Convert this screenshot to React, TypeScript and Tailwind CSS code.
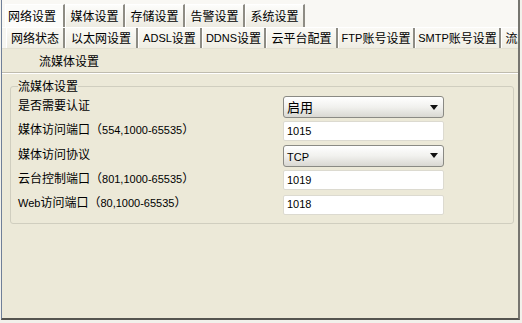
import React from 'react'

const FONT = { fontFamily: "'Noto Sans CJK SC', 'Liberation Sans', sans-serif" }

const TOP_TABS = ['网络设置', '媒体设置', '存储设置', '告警设置', '系统设置']

const SUB_TABS: { label: React.ReactNode; w: number }[] = [
  { label: '网络状态', w: 59 },
  { label: '以太网设置', w: 73 },
  { label: <><Lat>ADSL</Lat>设置</>, w: 64 },
  { label: <><Lat>DDNS</Lat>设置</>, w: 64 },
  { label: '云平台配置', w: 72 },
  { label: <><Lat>FTP</Lat>账号设置</>, w: 77 },
  { label: <><Lat>SMTP</Lat>账号设置</>, w: 86 },
  { label: '流媒体设置', w: 70 },
]

function Lat({ children }: { children: React.ReactNode }) {
  return (
    <span className="text-[11px]" style={{ fontFamily: "'Liberation Sans', sans-serif" }}>
      {children}
    </span>
  )
}

function Select({ value }: { value: React.ReactNode }) {
  return (
    <div className="w-[161px] h-[22px] rounded-[3px] border border-[#8A8A84] bg-gradient-to-b from-white via-[#F1F1EE] to-[#D9D8D2] flex items-center pl-[3px] pr-[5px] text-[13px] text-black">
      <span className="flex-1">{value}</span>
      <svg width="8" height="5" viewBox="0 0 8 5">
        <path d="M0 0 H8 L4 5 Z" fill="#111" />
      </svg>
    </div>
  )
}

function Input({ value }: { value: string }) {
  return (
    <div className="w-[161px] h-[20px] rounded-[2px] border border-[#DCDAD0] bg-white flex items-center pl-[3px]">
      <Lat>{value}</Lat>
    </div>
  )
}

function Row({ label, h, children }: { label: React.ReactNode; h: number; children: React.ReactNode }) {
  return (
    <div className="flex items-center" style={{ height: h }}>
      <div className="w-[265px] pb-[4px] text-[12px] text-black whitespace-nowrap">{label}</div>
      {children}
    </div>
  )
}

export default function App() {
  return (
    <div className="w-[522px] h-[323px] bg-[#F2F1EB]" style={FONT}>
      <div className="ml-[1px] w-[519px] h-[320px] border-l border-l-[#6F7F98] border-r-2 border-r-[#76756F] border-b-2 border-b-[#55544F] bg-[#ECE9D8] flex flex-col">
        {/* Top tab row */}
        <div className="h-[28px] bg-[#F9F8F4] flex items-end pl-[3px] border-b border-b-white">
          {TOP_TABS.map((t, i) => (
            <div
              key={t}
              className={`w-[60px] h-[23px] flex items-center text-[12px] text-black border-t border-l border-t-white border-l-white border-r-2 border-r-[#8E8C84] ${
                i === 0 ? 'bg-[#FCFCFA] justify-start pl-[2px]' : 'bg-gradient-to-b from-[#FDFDFB] to-[#EDEBE2] justify-center'
              }`}
            >
              {t}
            </div>
          ))}
        </div>

        {/* Sub tab row */}
        <div className="h-[21px] bg-[#F7F6F1] flex items-stretch pl-[4px] overflow-hidden border-b border-b-[#E3E0D2]">
          {SUB_TABS.map((t, i) => (
            <div
              key={i}
              style={{ width: t.w }}
              className="shrink-0 flex items-center justify-center text-[12px] text-black bg-gradient-to-b from-[#FBFAF6] to-[#EFEDE3] border-l border-l-white border-r-2 border-r-[#8E8C84] whitespace-nowrap"
            >
              {t.label}
            </div>
          ))}
        </div>

        {/* Selected tab row */}
        <div className="h-[24px] flex items-center pl-[37px] text-[12px] text-black border-b border-b-[#BFBCAE]">
          流媒体设置
        </div>
        <div className="h-px bg-white" />

        {/* Tab page */}
        <div className="pl-[8px] pr-[4px] pt-[4px]">
          <fieldset className="border border-[#D0CEBF] rounded-[3px] px-[7px] pb-[6px] pt-[1px]">
            <legend className="text-[12px] text-black leading-[16px]">流媒体设置</legend>
            <Row label="是否需要认证" h={24}>
              <Select value="启用" />
            </Row>
            <Row label={<>媒体访问端口（<Lat>554,1000-65535</Lat>）</>} h={24}>
              <Input value="1015" />
            </Row>
            <Row label="媒体访问协议" h={25}>
              <Select value={<Lat>TCP</Lat>} />
            </Row>
            <Row label={<>云台控制端口（<Lat>801,1000-65535</Lat>）</>} h={24}>
              <Input value="1019" />
            </Row>
            <Row label={<><Lat>Web</Lat>访问端口（<Lat>80,1000-65535</Lat>）</>} h={25}>
              <Input value="1018" />
            </Row>
          </fieldset>
        </div>
      </div>
    </div>
  )
}
